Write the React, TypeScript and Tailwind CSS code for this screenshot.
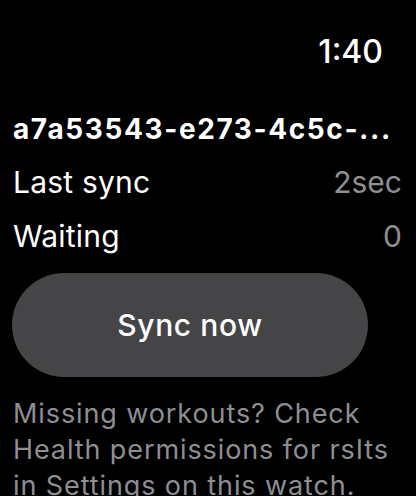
export default function App() {
  return (
    <div
      className="w-[416px] h-[496px] bg-black text-white overflow-hidden px-[13px]"
      style={{ fontFamily: "Inter, 'Noto Sans', sans-serif" }}
    >
      <div className="flex justify-end pt-[32px] pr-[20px]">
        <span className="text-[32px] leading-[40px] font-medium">1:40</span>
      </div>
      <div className="mt-[40px] h-[34px] text-[28px] leading-[34px] font-bold tracking-[1.6px] whitespace-nowrap">
        a7a53543-e273-4c5c-...
      </div>
      <div className="mt-[9px] flex justify-between items-center h-[54px] text-[30px] leading-[54px] pr-[1px]">
        <span className="tracking-[0.2px]">Last sync</span>
        <span className="text-[#8e8e93]">2sec</span>
      </div>
      <div className="flex justify-between items-center h-[54px] text-[30px] leading-[54px] pr-[1px]">
        <span className="tracking-[0.2px]">Waiting</span>
        <span className="text-[#8e8e93]">0</span>
      </div>
      <button className="mt-[10px] -ml-[1px] w-[356px] h-[104px] rounded-[52px] bg-[#454547] text-white text-[30px] tracking-[0.6px] font-medium flex items-center justify-center">
        Sync now
      </button>
      <p className="mt-[19px] text-[27px] leading-[36px] tracking-[0.9px] text-[#8e8e93] pr-[6px]">
        Missing workouts? Check Health permissions for rsIts in Settings on this watch.
      </p>
    </div>
  );
}
